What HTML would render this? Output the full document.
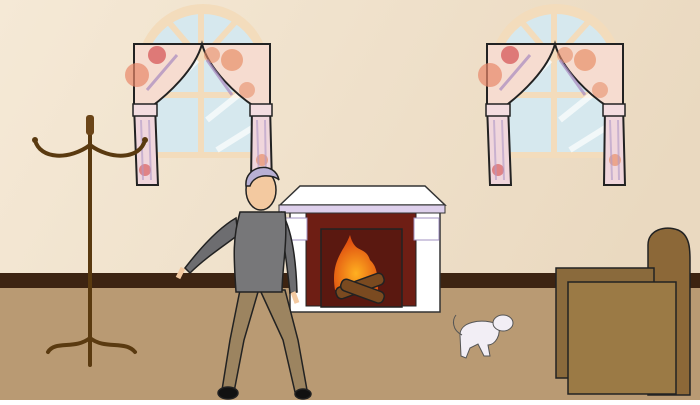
<!DOCTYPE html>
<html><head><style>body{margin:0;width:700px;height:400px;overflow:hidden}</style></head><body>
<svg width="700" height="400" viewBox="0 0 700 400" xmlns="http://www.w3.org/2000/svg">
<defs>
<linearGradient id="wall" x1="0" y1="0" x2="1" y2="0.3"><stop offset="0" stop-color="#f5e9d6"/><stop offset="1" stop-color="#ead9c0"/></linearGradient>
<radialGradient id="fire" cx="0.5" cy="0.7" r="0.6"><stop offset="0" stop-color="#ffb020"/><stop offset="1" stop-color="#e05010"/></radialGradient>
<g id="win">
<path d="M0 158 V70 A66 66 0 0 1 132 70 V158 Z" fill="#f3dcbc"/>
<path d="M8 152 V72 A58 58 0 0 1 124 72 V152 Z" fill="#d6e8ee"/>
<path d="M64 10 V152 M8 95 H124 M30 20 L64 60 L100 20" stroke="#f3dcbc" stroke-width="6" fill="none"/>
<path d="M20 100 L60 60 M70 120 L120 80 M80 150 L120 125" stroke="#fff" stroke-width="6" opacity=".7"/>
<path d="M-3 44 H133 V105 L118 107 C100 95 72 70 65 44 C58 70 30 95 14 107 L-3 105 Z" fill="#f6dcd0" stroke="#222" stroke-width="2"/>
<circle cx="-3" cy="0" r="0"/>
<circle cx="0" cy="75" r="12" fill="#e8886a" opacity=".7"/><circle cx="20" cy="55" r="9" fill="#d86060" opacity=".8"/><circle cx="95" cy="60" r="11" fill="#e8906a" opacity=".7"/><circle cx="110" cy="90" r="8" fill="#e8906a" opacity=".6"/><circle cx="75" cy="55" r="8" fill="#e8906a" opacity=".6"/>
<path d="M10 90 L40 55 M95 95 L70 60" stroke="#a88ac0" stroke-width="3" opacity=".7"/>
<path d="M-3 105 H18 L21 185 L0 185 Z" fill="#f0d6dc" stroke="#222" stroke-width="2"/>
<path d="M115 105 H133 L135 185 L114 185 Z" fill="#f0d6dc" stroke="#222" stroke-width="2"/>
<circle cx="8" cy="170" r="6" fill="#d86060" opacity=".7"/><circle cx="125" cy="160" r="6" fill="#e8906a" opacity=".7"/>
<path d="M4 120 L6 180 M12 120 L14 180 M120 120 L122 180 M128 120 L129 180" stroke="#b09ac8" stroke-width="2" opacity=".6"/>
<rect x="-4" y="104" width="24" height="12" fill="#f3dde0" stroke="#222" stroke-width="1.5"/>
<rect x="113" y="104" width="22" height="12" fill="#f3dde0" stroke="#222" stroke-width="1.5"/>
</g>
</defs>
<rect width="700" height="400" fill="url(#wall)"/>
<rect y="273" width="700" height="16" fill="#3d2412"/>
<rect y="288" width="700" height="112" fill="#b99a73"/>
<use href="#win" x="137" y="0"/>
<use href="#win" x="490" y="0"/>
<!-- coat rack -->
<g fill="none" stroke="#5a3a10" stroke-width="4" stroke-linecap="round">
<path d="M90 120 V365"/>
<path d="M90 145 C70 160 40 160 35 140 M90 145 C110 160 140 160 145 140"/>
<path d="M90 338 C75 350 55 340 48 352 M90 338 C105 350 125 340 135 352"/>
</g>
<rect x="86" y="115" width="8" height="20" rx="3" fill="#6b4518"/>
<circle cx="35" cy="140" r="3" fill="#5a3a10"/><circle cx="145" cy="140" r="3" fill="#5a3a10"/>
<!-- fireplace -->
<rect x="290" y="208" width="150" height="104" fill="#fff" stroke="#333" stroke-width="1.5"/>
<rect x="306" y="210" width="110" height="96" fill="#6e1e14" stroke="#222"/>
<rect x="321" y="229" width="81" height="78" fill="#5a1810" stroke="#222" stroke-width="1.5"/>
<path d="M335 290 C330 260 345 250 350 235 C355 255 365 245 370 260 C375 265 378 270 378 290 Z" fill="url(#fire)"/>
<g fill="#7a4a20" stroke="#222" stroke-width="1.5"><rect x="335" y="280" width="50" height="12" rx="5" transform="rotate(-20 360 286)"/><rect x="340" y="285" width="45" height="12" rx="5" transform="rotate(20 362 291)"/></g>
<path d="M280 205 L300 186 H425 L445 205 Z" fill="#fff" stroke="#333" stroke-width="1.5"/>
<rect x="279" y="205" width="166" height="8" fill="#ded0ec" stroke="#333"/>
<rect x="285" y="218" width="22" height="22" fill="#fff" stroke="#a090c0"/>
<rect x="414" y="218" width="25" height="22" fill="#fff" stroke="#a090c0"/>
<!-- man -->
<g stroke="#222" stroke-width="1.5">
<path d="M240 290 L230 340 L222 390 L234 392 L244 340 L258 292 Z" fill="#9c8460"/>
<path d="M260 290 L283 340 L295 392 L307 390 L298 340 L285 290 Z" fill="#9c8460"/>
<ellipse cx="228" cy="393" rx="10" ry="6" fill="#111"/><ellipse cx="303" cy="394" rx="8" ry="5" fill="#111"/>
<path d="M236 218 C215 230 195 255 185 268 L190 273 C205 258 225 245 238 235 Z" fill="#6d6d70"/>
<path d="M282 213 C292 230 296 260 297 292 L290 293 C287 265 284 240 280 225 Z" fill="#6d6d70"/>
<path d="M240 212 H285 C288 240 282 270 282 292 H236 C234 260 232 240 240 212 Z" fill="#777779"/>
<ellipse cx="261" cy="190" rx="15" ry="20" fill="#f3c9a0"/>
<path d="M246 186 C244 165 275 160 279 180 C275 175 255 172 250 186 Z" fill="#b8b0d4"/>
</g>
<path d="M183 268 L178 278 M293 292 L297 303" stroke="#f3c9a0" stroke-width="5"/>
<!-- cat -->
<g stroke="#555" stroke-width="1"><path d="M460 335 C460 322 480 318 498 324 C502 335 495 345 488 345 L490 356 L484 356 L478 344 L470 348 L466 358 L461 356 Z" fill="#f2eef5"/>
<ellipse cx="503" cy="323" rx="10" ry="8" fill="#f2eef5"/><path d="M462 335 C452 330 452 320 456 315" fill="none"/></g>
<!-- chair -->
<g stroke="#222" stroke-width="1.5">
<path d="M648 395 V245 C648 230 665 225 678 230 C690 235 690 250 690 260 V395 Z" fill="#8c6838"/>
<rect x="556" y="268" width="98" height="110" fill="#8a6a3c"/>
<rect x="568" y="282" width="108" height="112" fill="#9b7a45"/>
</g>
</svg>
</body></html>
